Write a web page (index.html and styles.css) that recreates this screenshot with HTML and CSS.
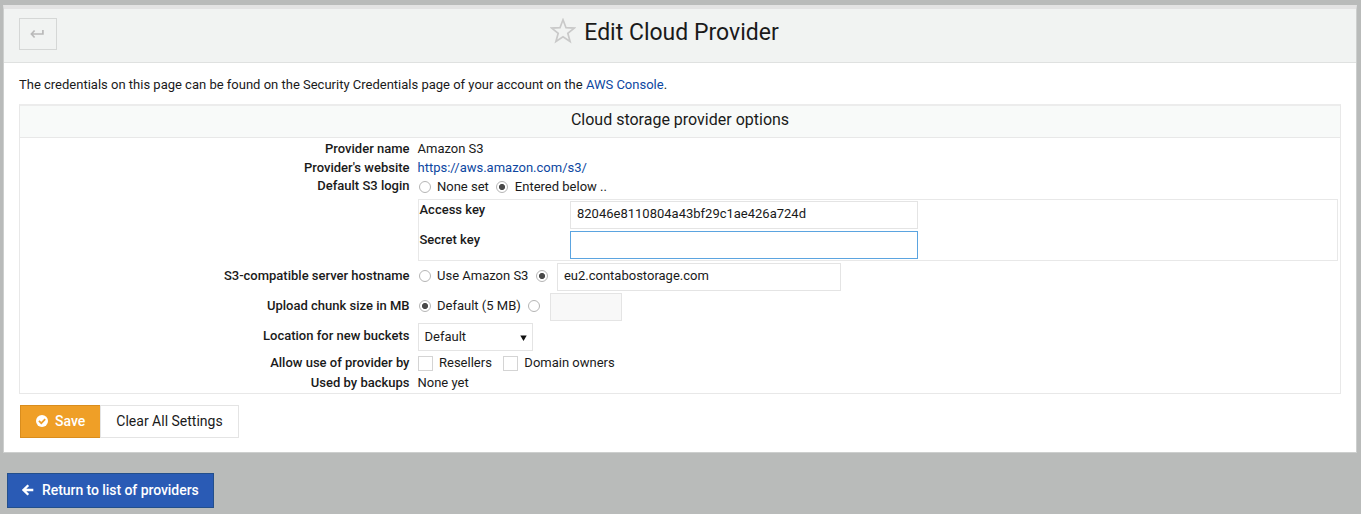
FILE: index.html
```
<!DOCTYPE html>
<html lang="en">
<head>
<meta charset="utf-8">
<title>Edit Cloud Provider</title>
<link rel="stylesheet" href="styles.css">
</head>
<body>
<main class="panel">
  <header class="panel-head">
    <button class="back" aria-label="Back"><svg width="14" height="10" viewBox="0 0 14 10"><path d="M12.900 1v4H1.800M4.600 1.500 1.400 5l3.200 3.500" fill="none" stroke="#b9b9b9" stroke-width="1.700"/></svg></button>
    <h1 class="title"><svg class="star" width="26" height="26" viewBox="0 0 26 26"><path d="M13 1.800 16 9.700l8.300.400-6.500 5.200 2.300 8.200L13 18.800l-7.100 4.700 2.300-8.200L1.700 10.100l8.300-.400z" fill="none" stroke="#c9c9c9" stroke-width="1.700"/></svg><span>Edit Cloud Provider</span></h1>
  </header>
  <p class="intro">The credentials on this page can be found on the Security Credentials page of your account on the <a href="#">AWS Console</a>.</p>
  <section class="options">
    <h2 class="options-title">Cloud storage provider options</h2>
    <div class="rows">
      <div class="row name"><b class="label">Provider name</b><span class="value">Amazon S3</span></div>
      <div class="row site"><b class="label">Provider's website</b><a class="value" href="#">https://aws.amazon.com/s3/</a></div>
      <div class="row login"><b class="label">Default S3 login</b><span class="value"><i class="radio"></i><span class="opt">None set</span><i class="radio on"></i><span class="opt">Entered below ..</span></span></div>
      <div class="keys">
        <div class="key"><b>Access key</b><input class="field" value="82046e8110804a43bf29c1ae426a724d"></div>
        <div class="key"><b>Secret key</b><input class="field active"></div>
      </div>
      <div class="row tall host-row"><b class="label">S3-compatible server hostname</b><span class="value"><i class="radio"></i><span class="opt">Use Amazon S3</span><i class="radio on"></i><input class="field host" value="eu2.contabostorage.com"></span></div>
      <div class="row tall"><b class="label">Upload chunk size in MB</b><span class="value"><i class="radio on"></i><span class="opt">Default (5 MB)</span><i class="radio"></i><input class="field chunk" disabled></span></div>
      <div class="row tall"><b class="label">Location for new buckets</b><span class="value"><span class="select">Default<svg width="7" height="7" viewBox="0 0 7 7"><path d="M.300 1.500h6.400L3.500 7z" fill="#111"/></svg></span></span></div>
      <div class="row allow"><b class="label">Allow use of provider by</b><span class="value"><i class="check"></i><span class="copt">Resellers</span><i class="check"></i><span class="copt">Domain owners</span></span></div>
      <div class="row used"><b class="label">Used by backups</b><span class="value">None yet</span></div>
    </div>
  </section>
  <div class="actions">
    <button class="btn save"><svg width="12" height="12" viewBox="0 0 12 12"><circle cx="6" cy="6" r="6" fill="#fff"/><path d="M2.900 5.800 5.300 8.200 9.200 4.200" fill="none" stroke="#ef9f27" stroke-width="1.700"/></svg><span>Save</span></button>
    <button class="btn clear">Clear All Settings</button>
  </div>
</main>
<a class="btn return" href="#"><svg width="12" height="12" viewBox="0 0 12 12"><path d="M11.300 6H2M6.300 1.200 1.500 6l4.800 4.800" fill="none" stroke="#fff" stroke-width="2.300"/></svg><span>Return to list of providers</span></a>
</body>
</html>
```
FILE: styles.css
```
* { box-sizing: border-box; }
html { background: #b9bbba; }
body { margin: 0; padding: 5px 4px 0 3px; height: 514px; overflow: hidden; font: 13px/20px Roboto, sans-serif; color: #1a1a1a; }
a { color: #0d47a1; text-decoration: none; }
h1, h2, p { margin: 0; font-weight: 400; }
button, input { font: inherit; letter-spacing: inherit; color: inherit; }
svg { display: block; flex: none; }
.panel { height: 448px; background: #fff; border: 1px solid #cdcfce; border-top: 4px solid #e3e3e3; }
.panel-head { height: 54px; background: #f1f3f2; border-bottom: 1px solid #dfe1e0; display: grid; grid-template-columns: 38px 1fr 38px; padding: 0 15px; align-items: start; }
.back { width: 38px; height: 32px; margin-top: 9px; padding: 0 2px 0 0; background: transparent; border: 1px solid #d5d7d6; display: flex; align-items: center; justify-content: center; }
.title { height: 47px; display: flex; align-items: center; justify-content: center; gap: 8px; font-size: 23px; padding-right: 31px; }
.star { margin-bottom: 3px; }
.intro { margin: 12px 15px 0; height: 29px; }
.options { margin: 0 15px; height: 290px; border: 1px solid #e8e8e8; border-top: 2px solid #ececec; }
.options-title { height: 32px; background: #f8faf9; border-bottom: 1px solid #e8e8e8; text-align: center; font-size: 16px; line-height: 27px; }
.rows { padding-top: 1px; }
.row { display: grid; grid-template-columns: 389.5px 1fr; column-gap: 8px; height: 20px; }
.label { text-align: right; font-weight: 500; }
.value { display: flex; align-items: center; }
.row.name { height: 19px; }
.row.site { height: 19px; line-height: 19px; }
.row.login { height: 22px; line-height: 18px; }
.row.login .value { height: 20px; }
.radio { width: 12px; height: 12px; flex: none; margin: 0 6.500px 0 1px; border: 1px solid #b5b5b5; border-radius: 50%; background: #fff; }
.radio.on { background: radial-gradient(circle, #4a4a4a 0 2.700px, #fff 3.400px); }
.opt { margin-right: 6.500px; }
.keys { margin: 0 2px 0 398px; height: 62px; border: 1px solid #e8e8e8; padding: 1px 1px 1px 0; }
.key { display: grid; grid-template-columns: 150.500px 348px; height: 30px; padding-left: .5px; }
.key b { font-weight: 500; line-height: 18px; }
.field { width: 348px; height: 28px; margin: 0; padding: 0 6px 3px; border: 1px solid #e4e4e4; background: #fff; outline: 0; }
.field.active { border-color: #5ba4e0; }
.tall { height: 30px; line-height: 27px; }
.tall .value { height: 28px; }
.host-row { margin-top: 2px; }
.tall .label { line-height: 25px; }
.tall .radio { margin-bottom: 2px; }
.tall .opt { line-height: 20px; margin-bottom: 3px; }
.host { width: 284px; margin-left: 2.500px; }
.chunk { width: 72px; margin-left: 3px; background: #f8f8f8; }
.select { width: 115px; height: 28px; border: 1px solid #e4e4e4; padding: 0 5px 2px 6px; display: flex; align-items: center; justify-content: space-between; }
.select svg { margin-top: 2px; }
.check { width: 15px; height: 15px; flex: none; border: 1px solid #d4d4d4; margin-right: 6.500px; }
.copt { margin-right: 11px; }
.actions { display: flex; margin: 11px 16px 0; }
.btn { display: flex; align-items: center; border: 1px solid; font-size: 14px; padding: 0 15px; white-space: nowrap; }
.btn span { margin-bottom: 2px; }
.save { width: 80px; height: 33px; background: #ef9f27; border-color: #d98d1d; border-right: 0; color: #fff; gap: 7px; font-weight: 500; }
.clear { width: 139px; height: 33px; padding-bottom: 2px; background: #fff; border-color: #e4e4e4; justify-content: center; }
.save svg, .return svg { margin-bottom: 1px; }
.return { width: 207px; height: 35px; margin: 20px 0 0 4px; background: #2a5bb5; border-color: #234f8c; color: #fff; gap: 8px; font-weight: 500; letter-spacing: -.06px; padding: 0 14px; }
```
